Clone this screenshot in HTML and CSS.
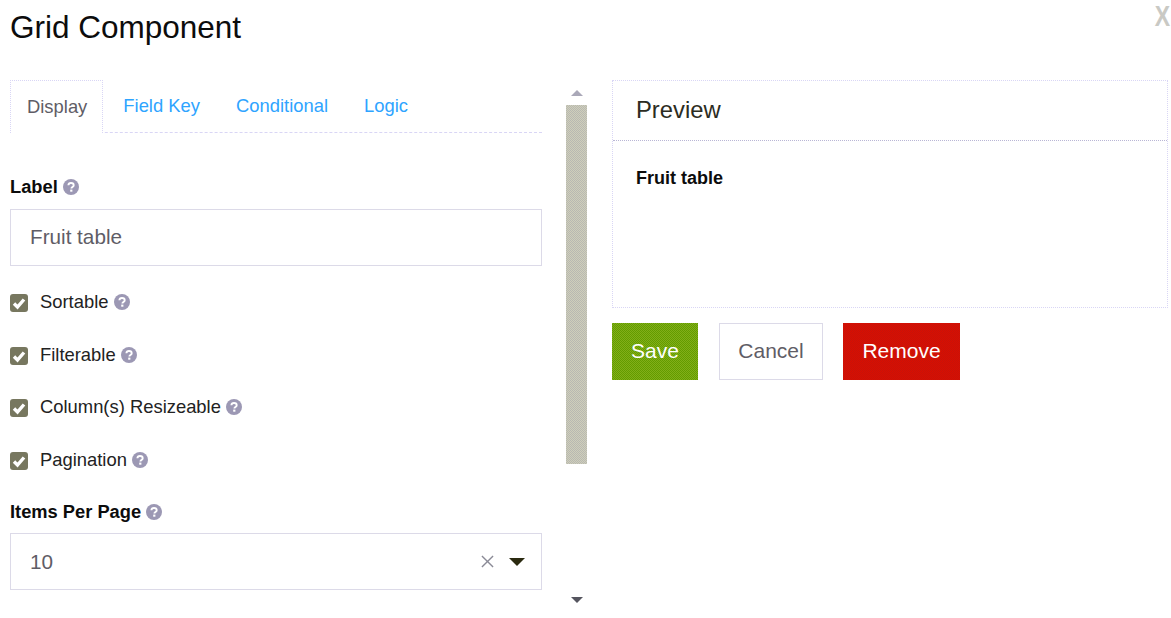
FILE: index.html
```html
<!DOCTYPE html>
<html lang="en">
<head>
    <meta charset="UTF-8">
    <meta name="viewport" content="width=device-width, initial-scale=1.0">
    <title>Grid Component</title>
    <link rel="stylesheet" href="styles.css">
</head>
<body>
    <div class="dialog">
        <a class="close">X</a>
        <h1>Grid Component</h1>

        <div class="columns">
            <!-- Settings form -->
            <div class="settings">
                <div class="form-area">
                    <ul class="tabs">
                        <li class="tab active">Display</li>
                        <li class="tab">Field Key</li>
                        <li class="tab">Conditional</li>
                        <li class="tab">Logic</li>
                    </ul>

                    <div class="field-label label-first">Label <svg class="help" viewBox="0 0 16 16"><use href="#help"></use></svg></div>
                    <div class="text-input">Fruit table</div>

                    <div class="check-row check-first"><span class="checkbox"><svg viewBox="0 0 18 18"><path d="M4 9.5l3.5 3.5L14 5.5"></path></svg></span>Sortable <svg class="help" viewBox="0 0 16 16"><use href="#help"></use></svg></div>
                    <div class="check-row"><span class="checkbox"><svg viewBox="0 0 18 18"><path d="M4 9.5l3.5 3.5L14 5.5"></path></svg></span>Filterable <svg class="help" viewBox="0 0 16 16"><use href="#help"></use></svg></div>
                    <div class="check-row"><span class="checkbox"><svg viewBox="0 0 18 18"><path d="M4 9.5l3.5 3.5L14 5.5"></path></svg></span>Column(s) Resizeable <svg class="help" viewBox="0 0 16 16"><use href="#help"></use></svg></div>
                    <div class="check-row"><span class="checkbox"><svg viewBox="0 0 18 18"><path d="M4 9.5l3.5 3.5L14 5.5"></path></svg></span>Pagination <svg class="help" viewBox="0 0 16 16"><use href="#help"></use></svg></div>

                    <div class="field-label label-items">Items Per Page <svg class="help" viewBox="0 0 16 16"><use href="#help"></use></svg></div>
                    <div class="select-input">
                        <span class="select-value">10</span>
                        <svg class="clear" viewBox="0 0 14 14"><path d="M1 1l12 12M13 1L1 13"></path></svg>
                        <span class="caret"></span>
                    </div>
                </div>

                <div class="scrollbar">
                    <span class="arrow-up"></span>
                    <div class="thumb"></div>
                    <span class="arrow-down"></span>
                </div>
            </div>

            <!-- Preview and actions -->
            <div class="side">
                <div class="preview">
                    <div class="preview-head">Preview</div>
                    <div class="preview-body">Fruit table</div>
                </div>
                <div class="actions">
                    <button class="btn btn-save">Save</button>
                    <button class="btn btn-cancel">Cancel</button>
                    <button class="btn btn-remove">Remove</button>
                </div>
            </div>
        </div>
    </div>

    <svg class="defs" width="0" height="0">
        <symbol id="help" viewBox="0 0 16 16">
            <circle cx="8" cy="8" r="8" fill="#9c98b4"></circle>
            <path d="M5.4 6.2C5.5 4.7 6.6 4 8 4c1.5 0 2.7.8 2.7 2.2 0 1.9-2.3 1.8-2.3 3.3" fill="none" stroke="#fff" stroke-width="1.9"></path>
            <rect x="7.2" y="10.6" width="2.2" height="2.1" fill="#fff"></rect>
        </symbol>
    </svg>
</body>
</html>
```

FILE: styles.css
```css
* {
    box-sizing: border-box;
}
body {
    font-family: "Liberation Sans", Arial, sans-serif;
    margin: 0;
    background-color: #fff;
    color: #111;
}
.dialog {
    position: relative;
    padding: 10px 3px 0 10px;
    height: 618px;
    overflow: hidden;
}
.defs {
    position: absolute;
}
h1 {
    font-size: 31.5px;
    font-weight: normal;
    line-height: 34px;
    margin: 0 0 36px;
    color: #0c0c0c;
}
.close {
    position: absolute;
    top: 6px;
    right: 1px;
    font-size: 23px;
    line-height: 20px;
    font-weight: bold;
    color: #c9c9c4;
    transform: scaleY(1.3);
}
.columns {
    display: flex;
    gap: 25px;
}
.settings {
    display: flex;
    gap: 24px;
    width: 577px;
}
.form-area {
    width: 532px;
}

/* Tabs */
.tabs {
    display: flex;
    list-style: none;
    margin: 0;
    padding: 0;
    height: 53px;
    border-bottom: 1px dashed #d9d6f5;
}
.tab {
    font-size: 18.4px;
    line-height: 51px;
    padding: 0 16px 0 17px;
    margin-right: 3px;
    color: #2ea4ff;
}
.tab.active {
    height: 53px;
    padding: 0 15px 0 16px;
    background-color: #fff;
    color: #5f5d66;
    border: 1px dotted #d9d6f5;
    border-bottom: none;
}

/* Form fields */
.field-label {
    display: flex;
    align-items: center;
    gap: 5px;
    font-size: 18.3px;
    font-weight: bold;
    line-height: 20px;
    color: #0c0c0c;
}
.label-first {
    margin-top: 44px;
}
.label-items {
    margin-top: 32px;
}
.help {
    width: 16px;
    height: 16px;
}
.text-input,
.select-input {
    height: 57px;
    margin-top: 12px;
    padding: 0 19px;
    border: 1px solid #dcdae8;
    font-size: 20.7px;
    line-height: 53px;
    color: #5f5d66;
}
.check-row {
    display: flex;
    align-items: center;
    gap: 5px;
    height: 20px;
    margin-top: 32.6px;
    font-size: 18.4px;
    color: #222;
}
.check-first {
    margin-top: 26px;
}
.checkbox {
    width: 18px;
    height: 18px;
    margin-top: 2px;
    margin-right: 7px;
    border-radius: 3px;
    background-color: #77775f;
}
.checkbox svg {
    display: block;
}
.checkbox path {
    fill: none;
    stroke: #fff;
    stroke-width: 3.4;
}
.select-input {
    display: flex;
    align-items: center;
    margin-top: 11px;
    padding-right: 16px;
}
.select-value {
    flex: 1;
}
.clear {
    width: 13px;
    height: 13px;
    margin-right: 15px;
}
.clear path {
    stroke: #8a8a96;
    stroke-width: 1.5;
}
.caret {
    border-left: 8px solid transparent;
    border-right: 8px solid transparent;
    border-top: 8px solid #2b2a10;
    margin-top: 2px;
}

/* Scrollbar */
.scrollbar {
    width: 21px;
    display: flex;
    flex-direction: column;
    align-items: center;
}
.arrow-up {
    margin-top: 10px;
    border-left: 6px solid transparent;
    border-right: 6px solid transparent;
    border-bottom: 6px solid #aaa8b8;
}
.thumb {
    width: 21px;
    height: 359px;
    margin-top: 9px;
    background: repeating-conic-gradient(#b8b8b2 0 25%, #cfcfba 0 50%) 0 0 / 2px 2px;
}
.arrow-down {
    margin-top: 133px;
    border-left: 6px solid transparent;
    border-right: 6px solid transparent;
    border-top: 6px solid #55555f;
}

/* Preview */
.side {
    width: 556px;
}
.preview {
    height: 228px;
    border: 1px dotted #d9d6f5;
}
.preview-head {
    height: 60px;
    padding-left: 23px;
    font-size: 23.8px;
    line-height: 58px;
    color: #2c2c22;
    border-bottom: 1px dotted #b9b6d5;
}
.preview-body {
    padding: 27px 23px;
    font-size: 18px;
    line-height: 20px;
    font-weight: bold;
    color: #0c0c0c;
}
.actions {
    display: flex;
    gap: 20px;
    margin-top: 15px;
}
.btn {
    height: 57px;
    font-family: inherit;
    font-size: 21px;
    border: 1px solid transparent;
    padding: 0 0 2px;
}
.btn-save {
    width: 86px;
    background: repeating-conic-gradient(#629c00 0 25%, #82ae18 0 50%) 0 0 / 2px 2px;
    color: #fff;
}
.btn-cancel {
    width: 104px;
    margin-left: 1px;
    background-color: #fff;
    color: #5f5d66;
    border-color: #dcdae8;
}
.btn-remove {
    width: 117px;
    background: repeating-conic-gradient(#da0e00 0 25%, #c6130a 0 50%) 0 0 / 2px 2px;
    color: #fff;
}
```
